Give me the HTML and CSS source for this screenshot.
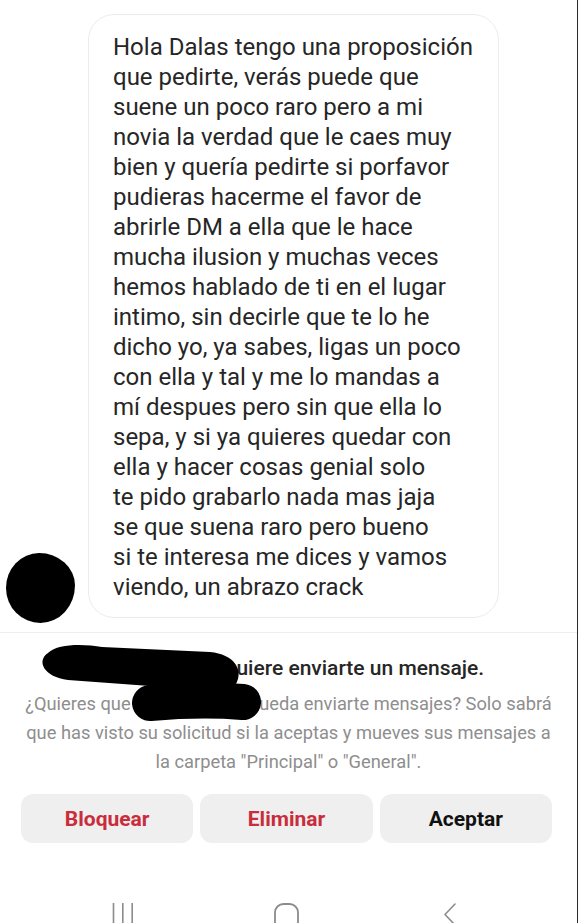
FILE: index.html
```html
<!DOCTYPE html>
<html lang="es">
<head>
<meta charset="utf-8">
<title>Solicitud de mensaje</title>
<link rel="stylesheet" href="styles.css">
</head>
<body>
<div class="screen">
  <section class="thread">
    <div class="msg-row">
      <div class="avatar"></div>
      <div class="bubble">
        <p class="msg-text">Hola Dalas tengo una proposición<br>que pedirte, verás puede que<br>suene un poco raro pero a mi<br>novia la verdad que le caes muy<br>bien y quería pedirte si porfavor<br>pudieras hacerme el favor de<br>abrirle DM a ella que le hace<br>mucha ilusion y muchas veces<br>hemos hablado de ti en el lugar<br>intimo, sin decirle que te lo he<br>dicho yo, ya sabes, ligas un poco<br>con ella y tal y me lo mandas a<br>mí despues pero sin que ella lo<br>sepa, y si ya quieres quedar con<br>ella y hacer cosas genial solo<br>te pido grabarlo nada mas jaja<br>se que suena raro pero bueno<br>si te interesa me dices y vamos<br>viendo, un abrazo crack</p>
      </div>
    </div>
  </section>
  <section class="request">
    <p class="req-title"><span class="uname">usuario_ocult</span> quiere enviarte un mensaje.</p>
    <p class="req-desc">¿Quieres que <span class="uname">usuario_ocult</span> pueda enviarte mensajes? Solo sabrá<br>que has visto su solicitud si la aceptas y mueves sus mensajes a<br>la carpeta "Principal" o "General".</p>
    <div class="actions">
      <button class="btn btn-danger">Bloquear</button>
      <button class="btn btn-danger">Eliminar</button>
      <button class="btn btn-accept">Aceptar</button>
    </div>
  </section>
  <nav class="navbar">
    <svg class="nav-recent" width="22" height="24" viewBox="0 0 22 24"><path d="M1.5 0V24M10.8 0V24M20.2 0V24" fill="none" stroke="#8c8c8c" stroke-width="1.6"/></svg>
    <svg class="nav-home" width="26" height="24" viewBox="0 0 26 24"><rect x="1" y="1" width="23" height="28" rx="8.5" fill="none" stroke="#8c8c8c" stroke-width="1.8"/></svg>
    <svg class="nav-back" width="14" height="24" viewBox="0 0 14 24"><path d="M12 1L2 11.5L12 22" fill="none" stroke="#8c8c8c" stroke-width="1.6" stroke-linecap="round" stroke-linejoin="round"/></svg>
  </nav>
  <svg class="redact" width="578" height="923" viewBox="0 0 578 923">
    <path d="M48 653 C 58 643, 85 644, 102 647 L 210 652 C 234 654, 244 670, 236 684 C 226 691, 200 689, 150 686 L 68 680 C 44 677, 36 661, 48 653 Z" fill="#000"/>
    <path d="M150 703 C 184 700, 219 700, 243 702" fill="none" stroke="#000" stroke-width="36" stroke-linecap="round"/>
  </svg>
</div>
</body>
</html>
```
FILE: styles.css
```css
* { box-sizing: border-box; }
html, body { margin: 0; padding: 0; background: #fff; }
body { font-family: Roboto, "Noto Sans", "Liberation Sans", sans-serif; color: #262626; }
.screen {
  position: relative;
  width: 578px;
  height: 923px;
  overflow: hidden;
  border-right: 1px solid #2a2a2a;
  background: #fff;
}
.thread { padding: 14px 0 14px 6px; }
.msg-row { display: flex; align-items: flex-end; gap: 13px; }
.avatar {
  width: 69px;
  height: 70px;
  flex: none;
  background: #000;
  border-radius: 48% 52% 50% 50% / 50% 46% 54% 50%;
  margin-bottom: -5px;
}
.bubble {
  width: 411px;
  border: 1px solid #ececec;
  border-radius: 26px;
  padding: 17px 8px 15px 24px;
}
.msg-text {
  margin: 0;
  font-size: 24px;
  line-height: 30px;
  color: #262626;
  white-space: nowrap;
}
.request { border-top: 1px solid #efefef; padding-top: 21px; }
.req-title {
  margin: 0;
  text-align: center;
  font-size: 21px;
  font-weight: 500;
  line-height: 28px;
  color: #262626;
}
.req-desc {
  margin: 7px 0 0;
  text-align: center;
  font-size: 18.3px;
  line-height: 29px;
  color: #8e8e8e;
  white-space: nowrap;
}
.actions {
  display: grid;
  grid-template-columns: repeat(3, 1fr);
  column-gap: 7px;
  margin: 18px 25px 0 21px;
}
.btn {
  height: 49px;
  border: 0;
  border-radius: 12px;
  background: #efefef;
  font-family: Roboto, "Noto Sans", "Liberation Sans", sans-serif;
  font-size: 21px;
  font-weight: 700;
  padding: 0;
}
.btn-danger { color: #c92d3c; }
.btn-accept { color: #111; }
.navbar {
  display: flex;
  align-items: flex-start;
  padding: 0 0 0 112px;
  margin-top: 60px;
}
.nav-recent { margin-right: 140px; }
.nav-home { margin-right: 143px; }
.redact { position: absolute; left: 0; top: 0; pointer-events: none; }
```
